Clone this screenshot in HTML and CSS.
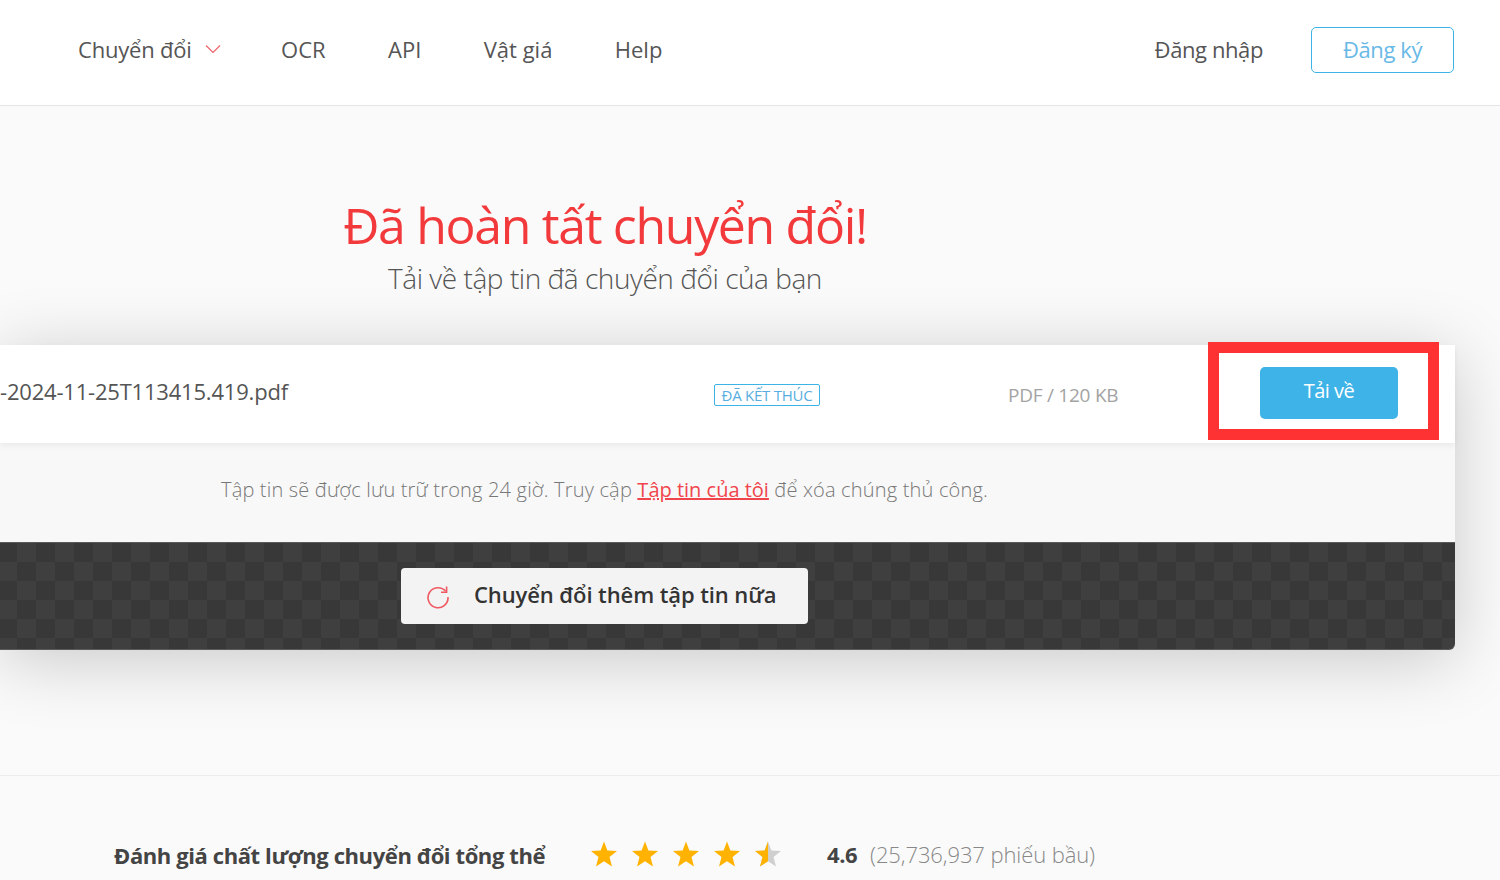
FILE: index.html
```html
<!DOCTYPE html>
<html lang="vi">
<head>
<meta charset="utf-8">
<title>Đã hoàn tất chuyển đổi</title>
<link rel="stylesheet" href="styles.css">
</head>
<body>
<header class="topbar">
  <nav class="nav">
    <a class="nav-item nav-convert">Chuyển đổi
      <svg class="chevron" width="16" height="10" viewBox="0 0 16 10"><path d="M1 1.5 L8 8.5 L15 1.5" fill="none" stroke="#f0616a" stroke-width="1.2"/></svg>
    </a>
    <a class="nav-item">OCR</a>
    <a class="nav-item">API</a>
    <a class="nav-item">Vật giá</a>
    <a class="nav-item">Help</a>
  </nav>
  <div class="account">
    <a class="nav-item login">Đăng nhập</a>
    <a class="signup">Đăng ký</a>
  </div>
</header>
<main class="main">
  <section class="hero">
    <h1 class="title">Đã hoàn tất chuyển đổi!</h1>
    <p class="subtitle">Tải về tập tin đã chuyển đổi của bạn</p>
  </section>
  <section class="card">
    <div class="file-row">
      <div class="file-name">-2024-11-25T113415.419.pdf</div>
      <div class="file-status"><span class="badge">ĐÃ KẾT THÚC</span></div>
      <div class="file-meta">PDF / 120 KB</div>
      <div class="file-action">
        <a class="download">Tải về</a>
        <span class="highlight"></span>
      </div>
    </div>
    <p class="note">Tập tin sẽ được lưu trữ trong 24 giờ. Truy cập <a class="note-link">Tập tin của tôi</a> để xóa chúng thủ công.</p>
    <div class="again-band">
      <a class="again">
        <svg class="again-icon" width="26" height="26" viewBox="0 0 26 26"><path d="M20.6 7.2 A10 10 0 1 0 23 13" fill="none" stroke="#ef5a62" stroke-width="1.6"/><path d="M21.6 2.6 V8.2 H16" fill="none" stroke="#ef5a62" stroke-width="1.6"/></svg>
        Chuyển đổi thêm tập tin nữa
      </a>
    </div>
  </section>
  <section class="rating">
    <strong class="rating-label">Đánh giá chất lượng chuyển đổi tổng thể</strong>
    <div class="stars">
      <svg width="28" height="26" viewBox="0 0 28 26"><path class="star-on" d="M14 0.5 L17.4 9.5 L27 10 L19.5 16 L22 25.5 L14 20.2 L6 25.5 L8.5 16 L1 10 L10.6 9.5 Z"/></svg>
      <svg width="28" height="26" viewBox="0 0 28 26"><path class="star-on" d="M14 0.5 L17.4 9.5 L27 10 L19.5 16 L22 25.5 L14 20.2 L6 25.5 L8.5 16 L1 10 L10.6 9.5 Z"/></svg>
      <svg width="28" height="26" viewBox="0 0 28 26"><path class="star-on" d="M14 0.5 L17.4 9.5 L27 10 L19.5 16 L22 25.5 L14 20.2 L6 25.5 L8.5 16 L1 10 L10.6 9.5 Z"/></svg>
      <svg width="28" height="26" viewBox="0 0 28 26"><path class="star-on" d="M14 0.5 L17.4 9.5 L27 10 L19.5 16 L22 25.5 L14 20.2 L6 25.5 L8.5 16 L1 10 L10.6 9.5 Z"/></svg>
      <svg width="28" height="26" viewBox="0 0 28 26"><path class="star-off" d="M14 0.5 L17.4 9.5 L27 10 L19.5 16 L22 25.5 L14 20.2 L6 25.5 L8.5 16 L1 10 L10.6 9.5 Z"/><path class="star-on" d="M14 0.5 L14 20.2 L6 25.5 L8.5 16 L1 10 L10.6 9.5 Z"/></svg>
    </div>
    <span class="score">4.6</span>
    <span class="votes">(25,736,937 phiếu bầu)</span>
  </section>
</main>
</body>
</html>
```
FILE: styles.css
```css
* { box-sizing: border-box; }
html, body { margin: 0; height: 880px; overflow: hidden; }
body { background: #fafafa; font-family: "Open Sans", sans-serif; color: #555; }
a { display: inline-block; }

.topbar {
  height: 106px;
  background: #fff;
  border-bottom: 1px solid #e6e6e6;
  display: flex;
  align-items: center;
  justify-content: space-between;
  padding: 0 46px 6px 78px;
}
.nav { display: flex; gap: 62.4px; margin-top: -2px; }
.account { display: flex; align-items: center; gap: 48px; }
.nav-item { font-size: 22px; color: #555; white-space: nowrap; display: flex; align-items: center; }
.nav-convert { letter-spacing: -0.2px; }
.login { letter-spacing: -0.4px; margin-top: -2px; }
.chevron { margin: 1px -2px 0 13px; }
.signup {
  width: 143px; height: 46px;
  border: 1px solid #3db4e8;
  border-radius: 5px;
  color: #69b9e6;
  font-size: 22px; letter-spacing: -0.4px;
  text-align: center; line-height: 42px;
}

.main { display: flex; flex-direction: column; }
.hero { width: 1210px; text-align: center; padding-top: 86px; height: 239px; }
.title { margin: 0; font-size: 50px; line-height: 66px; font-weight: 400; letter-spacing: -1.33px; color: #f23a3c; }
.subtitle { margin: 1px 0 0; font-size: 28px; line-height: 38px; font-weight: 300; letter-spacing: -0.45px; color: #555; }

.card {
  width: 1455px;
  background: #f8f8f8;
  box-shadow: 0 10px 70px rgba(0,0,0,.2);
  border-radius: 0 0 6px 0;
  overflow: visible;
}
.file-row {
  height: 98px;
  background: #fff;
  box-shadow: 0 3px 6px rgba(0,0,0,.06);
  display: grid;
  grid-template-columns: 714px 294px 200px 247px;
  align-items: center;
  position: relative;
}
.file-name { font-size: 22px; letter-spacing: -0.2px; color: #555; padding-bottom: 7px; white-space: nowrap; }
.file-status { display: flex; padding-top: 1px; }
.badge {
  border: 1px solid #3db4e8; border-radius: 2px;
  color: #58aee0; font-size: 15px; line-height: 20px; height: 22px;
  padding: 0 7px 0 6.5px; letter-spacing: -0.25px; white-space: nowrap;
}
.file-meta { font-size: 19px; letter-spacing: -0.25px; color: #a3a3a3; white-space: nowrap; padding-top: 2px; }
.file-action { display: flex; justify-content: flex-start; padding-left: 52px; padding-bottom: 3px; position: relative; height: 98px; align-items: center; }
.download {
  width: 138px; height: 52px;
  background: #3eb3e8; border-radius: 5px;
  color: #fff; font-size: 20px; line-height: 48px; text-align: center; letter-spacing: -0.5px;
}
.highlight { position: absolute; left: 0; top: -3px; width: 231px; height: 98px; border: 11px solid #fe3232; }

.note { margin: 0; height: 99px; padding-top: 32px; text-align: center; width: 1209px; font-size: 20px; line-height: 30px; font-weight: 300; letter-spacing: 0.18px; color: #777; }
.note-link { display: inline; color: #f0454c; text-decoration: underline; font-weight: 400; letter-spacing: 0; }

.again-band {
  height: 108px;
  border-radius: 0 0 6px 0;
  background-color: #3b3b3b;
  background-image: conic-gradient(#3f3f3f 25%, #383838 0 50%, #3f3f3f 0 75%, #383838 0);
  background-size: 38px 38px;
  background-position: -2px 1px;
  box-shadow: inset 0 1px 0 #5a5a5a, inset 0 -1px 0 #5a5a5a;
  padding: 26px 0 0 401px;
}
.again {
  width: 407px; height: 56px;
  background: #f3f3f3; border-radius: 4px;
  display: flex; align-items: center;
  padding: 0 0 4px 24px;
  font-size: 22px; font-weight: 600; letter-spacing: -0.1px; color: #333; white-space: nowrap;
}
.again-icon { margin-right: 23px; margin-top: 6px; }

.rating {
  margin-top: 125px;
  border-top: 1px solid #ececec;
  height: 110px;
  display: flex;
  align-items: flex-start;
  padding: 59px 0 0 114px;
}
.rating-label { font-size: 22px; font-weight: 700; letter-spacing: -0.4px; color: #444; white-space: nowrap; line-height: 44px; margin-top: -2px;}
.stars { display: flex; gap: 13px; margin-left: 45px; margin-top: 6px; }
.star-on { fill: #ffb300; }
.star-off { fill: #cfcfcf; }
.score { margin-left: 45px; margin-top: -1px; font-size: 22px; font-weight: 700; color: #444; letter-spacing: -0.5px; line-height: 40px; }
.votes { margin-left: 13px; margin-top: -1px; font-size: 22px; font-weight: 300; color: #888; letter-spacing: -0.1px; line-height: 40px; white-space: nowrap; }
```
